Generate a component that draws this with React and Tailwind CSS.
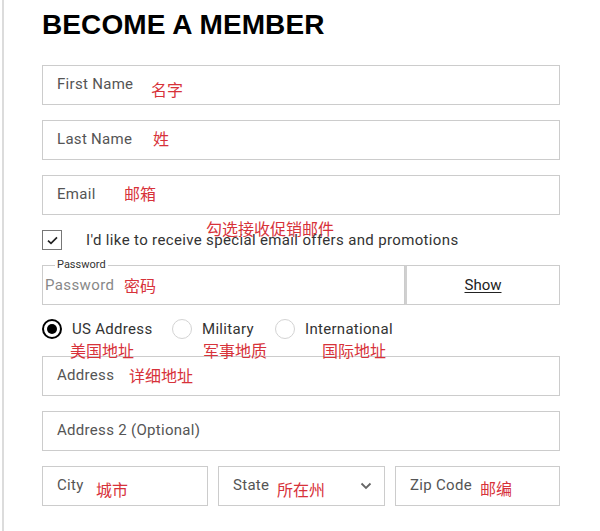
import React from "react";

// red hand-written notes lie over the form, so they sit absolute inside each box
const Note = ({ children, className = "" }) => (
    <span className={`absolute text-[16px] leading-[16px] text-[#d7323a] font-cjk whitespace-nowrap ${className}`}>{children}</span>
);

const Field = ({ label, note, noteClass = "", className = "" }) => (
    <div className={`relative h-[40px] border border-[#cccccc] bg-white flex items-center px-[14px] ${className}`}>
        <span className="text-[15px] text-[#555] tracking-[0.3px] -mt-[2px]">{label}</span>
        {note && <Note className={noteClass}>{note}</Note>}
    </div>
);

const Radio = ({ checked, label, className = "" }) => (
    <div className={`flex items-center ${className}`}>
        {checked ? (
            <span className="w-[20px] h-[20px] rounded-full border-2 border-black flex items-center justify-center">
                <span className="w-[10px] h-[10px] rounded-full bg-black" />
            </span>
        ) : (
            <span className="w-[20px] h-[20px] rounded-full border border-[#d3d3d3]" />
        )}
        <span className="ml-[10px] text-[15px] text-[#333] tracking-[0.3px]">{label}</span>
    </div>
);

export default function App() {
    return (
        <div className="w-[600px] h-[531px] bg-white overflow-hidden" style={{ fontFamily: "Roboto, 'Noto Sans CJK SC', sans-serif" }}>
            <style>{`.font-cjk{font-family:'Noto Sans CJK SC',sans-serif;}`}</style>
            <div className="ml-[2px] h-full border-l-2 border-[#dcdcdc] pl-[38px] pr-[40px]">
                <h1 className="pt-[8px] text-[28px] leading-[34px] font-bold text-black tracking-[0.1px]" style={{ fontFamily: "'Liberation Sans', Arial, sans-serif" }}>
                    BECOME A MEMBER
                </h1>

                <div className="mt-[23px] flex flex-col gap-[15px]">
                    <Field label="First Name" note="名字" noteClass="left-[108px] top-[15px]" />
                    <Field label="Last Name" note="姓" noteClass="left-[110px] top-[9px]" />
                    <Field label="Email" note="邮箱" noteClass="left-[81px] top-[9px]" />
                </div>

                {/* checkbox */}
                <div className="relative z-10 mt-[15px] h-[20px] flex items-center">
                    <span className="w-[20px] h-[20px] border border-[#777] flex items-center justify-center">
                        <svg width="11" height="9" viewBox="0 0 11 9" fill="none">
                            <path d="M1 4.6 L4 7.4 L10 1.4" stroke="#222" strokeWidth="1.7" />
                        </svg>
                    </span>
                    <span className="ml-[24px] text-[15px] text-[#333] tracking-[0.35px]">
                        I'd like to receive special email offers and promotions
                    </span>
                    <Note className="left-[164px] -top-[10px]">勾选接收促销邮件</Note>
                </div>

                {/* password */}
                <div className="mt-[15px] flex h-[40px]">
                    <div className="relative flex-1 border border-[#cccccc] flex items-center px-[2px]">
                        <span className="absolute left-[12px] -top-[8px] bg-white px-[2px] text-[11px] leading-[14px] text-[#333]">Password</span>
                        <span className="text-[15px] text-[#888] tracking-[0.4px]">Password</span>
                        <Note className="left-[81px] top-[11px]">密码</Note>
                    </div>
                    <div className="w-[155px] border border-l-2 border-[#cccccc] border-l-[#d0d0d0] flex items-center justify-center">
                        <span className="text-[15px] text-[#222] underline underline-offset-2">Show</span>
                    </div>
                </div>

                {/* radios */}
                <div className="relative z-10 mt-[14px] h-[20px] flex items-center">
                    <Radio checked label="US Address" className="w-[130px]" />
                    <Radio label="Military" className="w-[103px]" />
                    <Radio label="International" />
                    <Note className="left-[28px] top-[23px]">美国地址</Note>
                    <Note className="left-[161px] top-[23px]">军事地质</Note>
                    <Note className="left-[280px] top-[23px]">国际地址</Note>
                </div>

                <div className="mt-[17px] flex flex-col gap-[15px]">
                    <Field label="Address" note="详细地址" noteClass="left-[86px] top-[10px]" />
                    <Field label="Address 2 (Optional)" />
                    <div className="flex gap-[10px]">
                        <Field className="w-[166px]" label="City" note="城市" noteClass="left-[53px] top-[14px]" />
                        <div className="relative w-[167px] h-[40px] border border-[#cccccc] flex items-center px-[14px]">
                            <span className="text-[15px] text-[#555] tracking-[0.3px] -mt-[2px]">State</span>
                            <Note className="left-[58px] top-[14px]">所在州</Note>
                            <svg className="ml-auto mr-[-2px]" width="12" height="8" viewBox="0 0 12 8" fill="none">
                                <path d="M1.5 1.5 L6 6 L10.5 1.5" stroke="#666" strokeWidth="1.8" />
                            </svg>
                        </div>
                        <Field className="flex-1" label="Zip Code" note="邮编" noteClass="left-[84px] top-[13px]" />
                    </div>
                </div>
            </div>
        </div>
    );
}
